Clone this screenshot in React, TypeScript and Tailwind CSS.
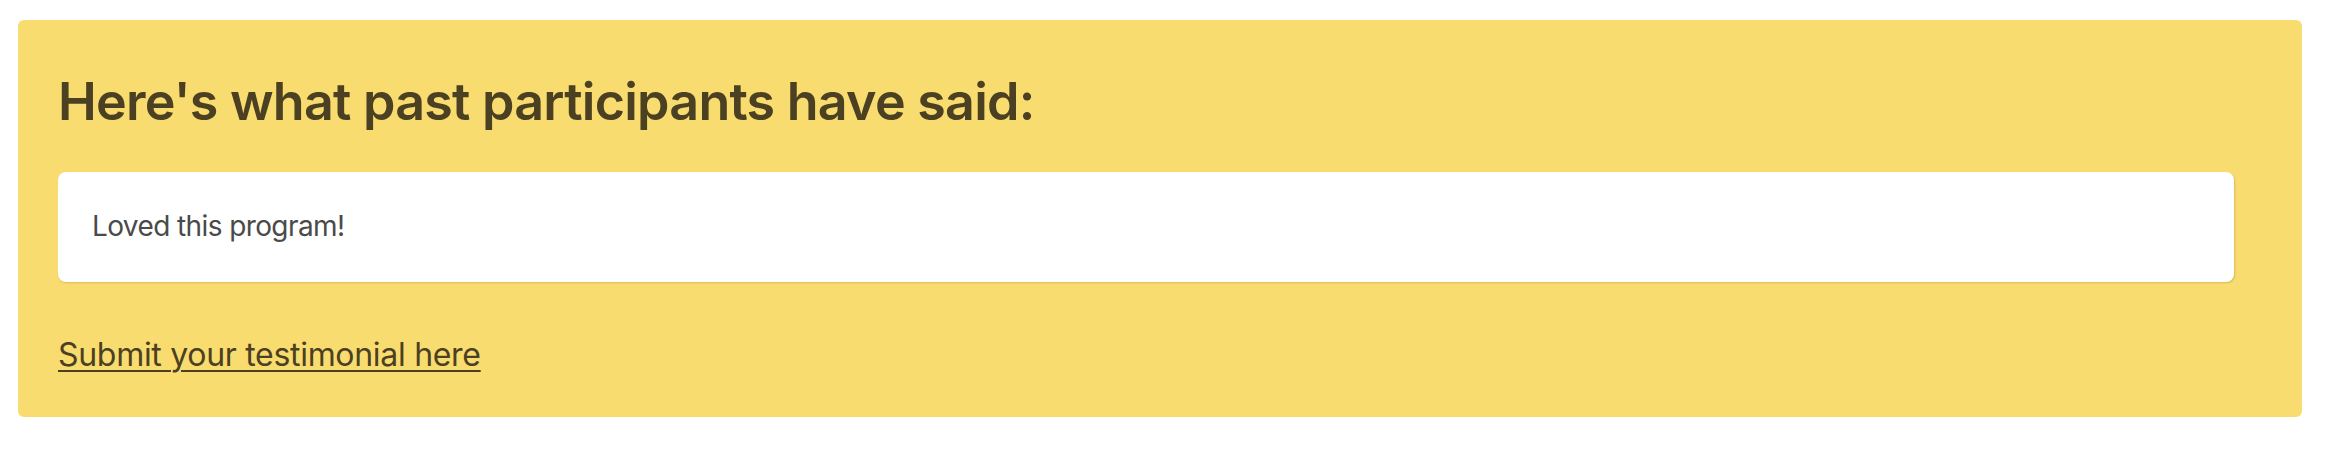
export default function App() {
  return (
    <div className="w-[2338px] h-[468px] bg-white pt-[20px] pl-[18px]" style={{ fontFamily: 'Inter, "Noto Sans", sans-serif' }}>
      <section className="w-[2284px] rounded-[6px] bg-[#f9dc6f] pl-[40px] pr-[68px] pt-[51px] pb-[38px]">
        <h2 className="text-[52px] leading-[62px] font-semibold text-[#4b4122] tracking-[-0.75px]">
          Here's what past participants have said:
        </h2>

        <div className="mt-[39px] rounded-[8px] bg-white px-[34px] pt-[33px] pb-[35px] shadow-[1px_1px_2px_rgba(120,100,20,0.25)]">
          <p className="text-[28px] leading-[42px] text-[#4a4a4a] tracking-[-0.6px]">Loved this program!</p>
        </div>

        <div className="mt-[49px]">
          <a href="#" className="text-[32px] leading-[48px] text-[#4b4122] tracking-[-0.3px] underline decoration-2 underline-offset-[4px]">
            Submit your testimonial here
          </a>
        </div>
      </section>
    </div>
  )
}
